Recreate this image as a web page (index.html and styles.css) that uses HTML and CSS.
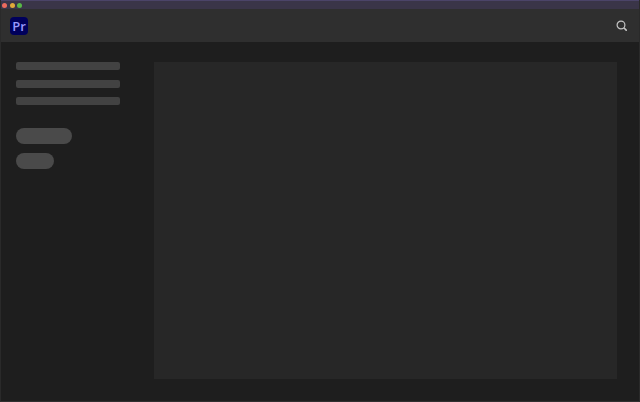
FILE: index.html
```html
<!DOCTYPE html>
<html lang="en">
<head>
  <meta charset="UTF-8" />
  <title>Premiere Pro</title>
  <link rel="stylesheet" href="styles.css">
</head>
<body>
  <div class="window">
    <!-- title bar -->
    <div class="titlebar">
      <span class="dot dot-red"></span>
      <span class="dot dot-yellow"></span>
      <span class="dot dot-green"></span>
    </div>

    <!-- app header -->
    <header class="header">
      <div class="logo">Pr</div>
      <svg class="search" width="11" height="11" viewBox="0 0 11 11" fill="none" stroke="#c4c4c4">
        <circle cx="5" cy="5" r="3.9" stroke-width="1.2" />
        <path d="M7.8 7.8 L10.8 10.8" stroke-width="1.6" />
      </svg>
    </header>

    <div class="content">
      <!-- sidebar placeholders -->
      <aside class="sidebar">
        <div class="bars">
          <div class="bar"></div>
          <div class="bar"></div>
          <div class="bar"></div>
        </div>
        <div class="pills">
          <div class="pill pill-wide"></div>
          <div class="pill pill-narrow"></div>
        </div>
      </aside>

      <!-- main placeholder -->
      <main class="panel"></main>
    </div>
  </div>
</body>
</html>
```

FILE: styles.css
```css
html, body {
  margin: 0;
  padding: 0;
  height: 100%;
  background: #1e1e1e;
}
.window {
  display: flex;
  flex-direction: column;
  height: 402px;
  box-sizing: border-box;
  border-left: 1px solid #2a2a2a;
  border-right: 1px solid #2a2a2a;
  border-bottom: 1px solid #303030;
  overflow: hidden;
}
.titlebar {
  display: flex;
  align-items: center;
  gap: 2.5px;
  height: 9px;
  padding-left: 1px;
  background: #3a3548;
  border-top: 1px solid #4b4468;
  box-sizing: border-box;
}
.dot {
  width: 5px;
  height: 5px;
  border-radius: 50%;
}
.dot-red { background: #ec6a5e; }
.dot-yellow { background: #e0a93a; }
.dot-green { background: #58b947; }
.header {
  display: flex;
  align-items: center;
  justify-content: space-between;
  height: 33px;
  padding: 0 12px 0 9px;
  background: #2f2f2f;
}
.logo {
  width: 18px;
  height: 18px;
  border-radius: 4px;
  background: #00005b;
  color: #9999ff;
  font-family: "Open Sans", sans-serif;
  font-size: 13px;
  font-weight: 600;
  line-height: 18px;
  text-align: center;
}
.content {
  display: flex;
  flex: 1;
  padding: 20px 22px 22px 15px;
  background: #1e1e1e;
}
.sidebar {
  width: 104px;
  margin-right: 34px;
}
.bars {
  display: flex;
  flex-direction: column;
  gap: 9.5px;
}
.bar {
  height: 8px;
  border-radius: 2px;
  background: #424242;
}
.pills {
  display: flex;
  flex-direction: column;
  gap: 9px;
  margin-top: 23px;
}
.pill {
  height: 16px;
  border-radius: 8px;
  background: #4a4a4a;
}
.pill-wide { width: 56px; }
.pill-narrow { width: 38px; }
.panel {
  flex: 1;
  background: #272727;
}
```
